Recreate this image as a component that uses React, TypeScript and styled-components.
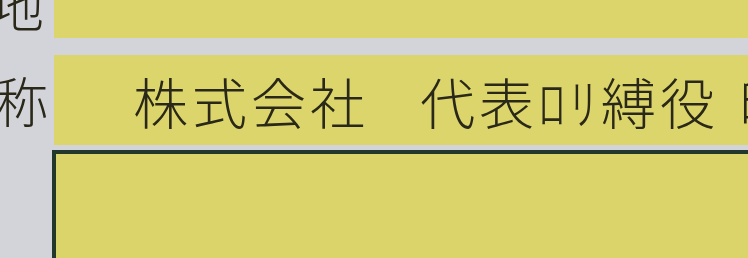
import React from 'react';
import styled, { createGlobalStyle } from 'styled-components';

const Global = createGlobalStyle`
  html, body {
    margin: 0;
    padding: 0;
    background: #d3d3da;
    overflow: hidden;
  }
`;

const Sheet = styled.div`
  width: 748px;
  height: 258px;
  overflow: hidden;
  display: grid;
  grid-template-columns: 54px 1fr;
  grid-template-rows: 38px 107px 1fr;
  font-family: "Noto Sans CJK JP", "Noto Sans CJK SC", sans-serif;
  font-weight: 300;
  color: #2a2818;
`;

const Label = styled.div<{ $align: 'end' | 'center' }>`
  display: flex;
  justify-content: flex-end;
  align-items: ${(p) => (p.$align === 'end' ? 'flex-end' : 'center')};
  overflow: hidden;
  white-space: nowrap;
  font-size: 54px;
  line-height: 1;
  padding-right: ${(p) => (p.$align === 'end' ? '10px' : '6px')};
  margin-top: ${(p) => (p.$align === 'center' ? '17px' : '0')};
`;

const Field = styled.div<{ $gapTop?: number }>`
  background: #dcd56c;
  margin-top: ${(p) => p.$gapTop ?? 0}px;
  display: flex;
  align-items: center;
  overflow: hidden;
  white-space: nowrap;
`;

const Value = styled.span`
  font-size: 55px;
  line-height: 1;
  padding-left: 79px;
  letter-spacing: 4px;
`;

const Gap = styled.span`
  margin-left: -8px;
`;

const Edge = styled.span`
  margin-left: 19px;
`;

const Memo = styled.div`
  grid-column: 1 / 3;
  margin: 5px 0 0 52px;
  background: #dbd46a;
  border-top: 4px solid #23382c;
  border-left: 4px solid #23382c;
`;

const Top = styled.span`
  transform: translateY(-6px);
`;

export default function App() {
  return (
    <>
      <Global />
      <Sheet>
        <Label $align="end">
          <Top>所在地</Top>
        </Label>
        <Field />
        <Label $align="center">名称</Label>
        <Field $gapTop={17}>
          <Value>
            株式会社<Gap>　</Gap>代表ﾛﾘ縛役<Edge>印</Edge>
          </Value>
        </Field>
        <Memo />
      </Sheet>
    </>
  );
}
